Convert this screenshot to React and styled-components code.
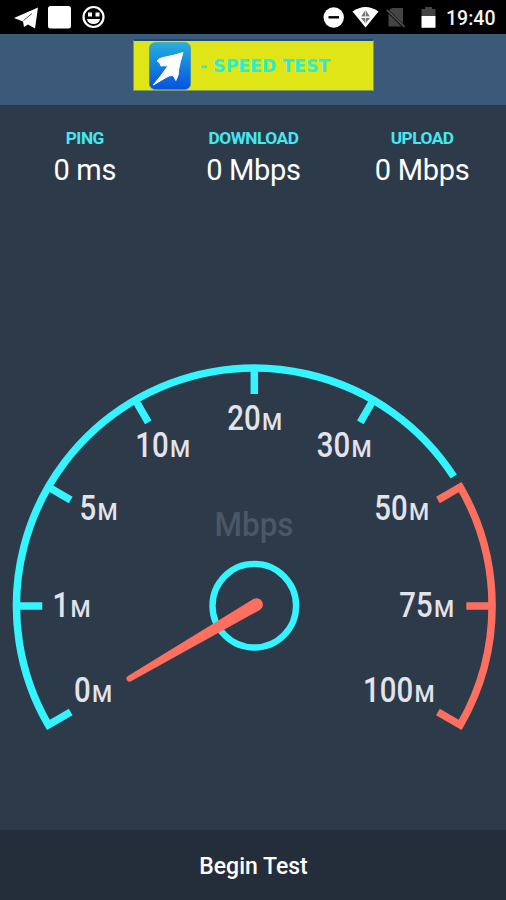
import React from "react";
import styled, { createGlobalStyle } from "styled-components";

const CYAN = "#33f4ff";
const CORAL = "#ff6f60";

const GlobalStyle = createGlobalStyle`
  * { box-sizing: border-box; }
  body { margin: 0; background: #2d3a4a; }
`;

const Screen = styled.div`
  width: 506px;
  height: 900px;
  display: flex;
  flex-direction: column;
  background: #2d3a4a;
  font-family: Roboto, "Liberation Sans", sans-serif;
  overflow: hidden;
`;

const StatusBar = styled.header`
  height: 34px;
  flex: none;
  display: flex;
  justify-content: space-between;
  background: #000;
`;

const StatusIcons = styled.svg`
  display: block;
  width: ${(p) => p.$width}px;
  height: 34px;
`;

const StatusRight = styled.div`
  display: flex;
`;

const Clock = styled.time`
  width: 61px;
  padding-left: 1px;
  color: #f4f4f4;
  font-size: 19.5px;
  font-weight: 500;
  line-height: 37px;
  white-space: nowrap;
`;

const TitleBar = styled.div`
  height: 71px;
  flex: none;
  padding: 5px 0 0 133px;
  background: #3b5978;
`;

const Banner = styled.div`
  width: 241px;
  height: 52px;
  display: flex;
  align-items: center;
  background: #dfe516;
  border: 1px solid #7f9a5c;
  border-top: 2px solid #174b7a;
  padding-left: 15px;
`;

const AppIcon = styled.svg`
  display: block;
  width: 42px;
  height: 48px;
  flex: none;
`;

const BannerTitle = styled.h1`
  margin: 0 0 0 9px;
  color: #26eedb;
  font-family: "DejaVu Sans", sans-serif;
  font-size: 17px;
  font-weight: 700;
  line-height: 48px;
  letter-spacing: 0.2px;
  white-space: nowrap;
`;

const Stats = styled.section`
  height: 105px;
  flex: none;
  display: grid;
  grid-template-columns: repeat(3, 168.67px);
  padding: 21px 0 0 0.5px;
`;

const Stat = styled.div`
  text-align: center;
`;

const StatLabel = styled.div`
  color: #45e8f0;
  font-size: 17.3px;
  font-weight: 700;
  line-height: 25px;
  letter-spacing: -0.5px;
`;

const StatValue = styled.div`
  color: #fff;
  font-size: 29px;
  line-height: 38px;
  letter-spacing: -0.3px;
`;

const GaugeArea = styled.main`
  flex: 1;
  min-height: 0;
`;

const GaugeSvg = styled.svg`
  display: block;
  width: 506px;
  height: 620px;
`;

const Digits = styled.text`
  font: 500 35px Roboto, sans-serif;
`;

const Suffix = styled.text`
  font: 500 24px Roboto, sans-serif;
`;

const BeginButton = styled.button`
  height: 70px;
  flex: none;
  padding: 1px 0 0 1px;
  border: 0;
  background: #242e3a;
  color: #fff;
  font: 500 23px/72px Roboto, sans-serif;
`;

const CX = 254.3;
const CY = 606;
const R = 237.8;
const TICK_R = 212;

const point = (deg, r) => {
  const a = (deg * Math.PI) / 180;
  return `${(CX + r * Math.cos(a)).toFixed(2)} ${(CY - r * Math.sin(a)).toFixed(2)}`;
};

// x is where the suffix begins; digits end just before it.
const MARKS = [
  { value: "0", x: 93, y: 702 },
  { value: "1", x: 71.5, y: 617 },
  { value: "5", x: 98.5, y: 520 },
  { value: "10", x: 171, y: 457 },
  { value: "20", x: 263, y: 429.5 },
  { value: "30", x: 352.5, y: 457 },
  { value: "50", x: 410, y: 520 },
  { value: "75", x: 435, y: 617 },
  { value: "100", x: 415.5, y: 702 },
];
const CONDENSE = 0.84;

function Mark({ value, x, y }) {
  return (
    <g fill="#e3e4ea">
      <Digits transform={`translate(${x - 2.3} ${y}) scale(${CONDENSE} 1)`} textAnchor="end">{value}</Digits>
      <Suffix transform={`translate(${x - 1} ${y}) scale(.96 1)`}>M</Suffix>
    </g>
  );
}

function Gauge() {
  return (
    <GaugeSvg viewBox="0 210 506 620">
      <g fill="none" strokeWidth="7.5">
        <path stroke={CYAN} d={`M${point(210, TICK_R)} L${point(210, R)} A${R} ${R} 0 0 1 ${point(33, R)}`} />
        {[180, 150, 120, 90, 60].map((deg) => (
          <path key={deg} stroke={CYAN} d={`M${point(deg, TICK_R)} L${point(deg, R)}`} />
        ))}
        <path
          stroke={CORAL}
          d={`M${point(30, TICK_R)} L${point(30, R)} A${R} ${R} 0 0 1 ${point(-30, R)} L${point(-30, TICK_R)}`}
        />
        <path stroke={CORAL} d={`M${point(0, TICK_R)} L${point(0, R)}`} />
      </g>
      {MARKS.map((m) => (
        <Mark key={m.value} {...m} />
      ))}
      <text x="214.5" y="536" fill="#4a5767" fontFamily="Roboto, sans-serif" fontWeight="500" fontSize="34" textLength="79" lengthAdjust="spacingAndGlyphs">
        Mbps
      </text>
      <circle cx="254.3" cy="605.7" r="41.8" fill="none" stroke={CYAN} strokeWidth="6.4" />
      <path fill={CORAL} d="M128 676 L253.4 599.1 A6.3 6.3 0 0 1 259.8 610 L131 681.2 A3 3 0 0 1 128 676Z" />
    </GaugeSvg>
  );
}

const STATS = [
  ["PING", "0 ms"],
  ["DOWNLOAD", "0 Mbps"],
  ["UPLOAD", "0 Mbps"],
];

export default function App() {
  return (
    <>
      <GlobalStyle />
      <Screen>
        <StatusBar>
          <StatusIcons $width={120} viewBox="0 0 120 34">
            <path fill="#fff" d="M14 18 L38 7.5 L35 28.500 L28 24.500 L24 27 L23 21.500Z" />
            <path d="M23.500 20.500 L32 13.500" fill="none" stroke="#555" strokeWidth="1" />
            <rect x="48" y="6" width="23" height="22.5" rx="2.5" fill="#fff" />
            <circle cx="93.5" cy="17" r="10" fill="none" stroke="#fff" strokeWidth="2.2" />
            <path fill="#fff" d="M88 12.5h4v4h-4zM95.5 12.5h4v4h-4zM87 19h13c-.5 3.2-3 5-6.500 5s-6-1.800-6.500-5z" />
          </StatusIcons>
          <StatusRight>
            <StatusIcons $width={125} viewBox="320 0 125 34">
              <circle cx="333.700" cy="17.500" r="10.200" fill="#fff" />
              <path d="M328.500 17.300h10.500" stroke="#000" strokeWidth="2.400" />
              <path fill="#fff" d="M352.500 11.500 Q365.500 2.500 378.500 11.500 L365.500 27.500Z" />
              <path fill="#777" d="M365.500 10 L361 16.500H370Z M361 18 H370 L365.500 23.500Z" />
              <path d="M365.500 10v13M361 17h9" stroke="#e8e8e8" strokeWidth=".8" />
              <path fill="#444" d="M392 8h11v16L389 10z M388.500 13.500 L401.500 26.500H388.500Z" />
              <path d="M387 10 L404.500 27" stroke="#575757" strokeWidth="1.700" />
              <path fill="#444" d="M421.500 16V9h3.500V7h7v2h3.500v7z" />
              <path fill="#fff" d="M421.500 16h14v11.800h-14z" />
            </StatusIcons>
            <Clock>19:40</Clock>
          </StatusRight>
        </StatusBar>
        <TitleBar>
          <Banner>
            <AppIcon viewBox="0 0 42 48">
              <defs>
                <linearGradient id="iconFill" x1="0" y1="0" x2="0" y2="1">
                  <stop offset="0" stopColor="#25afe0" />
                  <stop offset="1" stopColor="#0752df" />
                </linearGradient>
              </defs>
              <rect x=".3" y=".5" width="41.400" height="47" rx="6" fill="url(#iconFill)" stroke="#4a9995" strokeWidth=".6" />
              <path
                fill="#fff"
                stroke="#fff"
                strokeWidth="1"
                strokeLinejoin="round"
                d="M34 10.500 Q31 20 29.500 28 Q30 33 26.800 38.500 Q25.500 34.500 23.500 33.500 Q20 33.300 17 35.500 L4.300 43 Q12 34 19 24 Q15.500 23.500 12 24 Q11.500 20.500 8 18.800 Q9.500 16.500 14 15.500 Q25 13.500 34 10.500Z"
              />
            </AppIcon>
            <BannerTitle>- SPEED TEST</BannerTitle>
          </Banner>
        </TitleBar>
        <Stats>
          {STATS.map(([label, value]) => (
            <Stat key={label}>
              <StatLabel>{label}</StatLabel>
              <StatValue>{value}</StatValue>
            </Stat>
          ))}
        </Stats>
        <GaugeArea>
          <Gauge />
        </GaugeArea>
        <BeginButton>Begin Test</BeginButton>
      </Screen>
    </>
  );
}
